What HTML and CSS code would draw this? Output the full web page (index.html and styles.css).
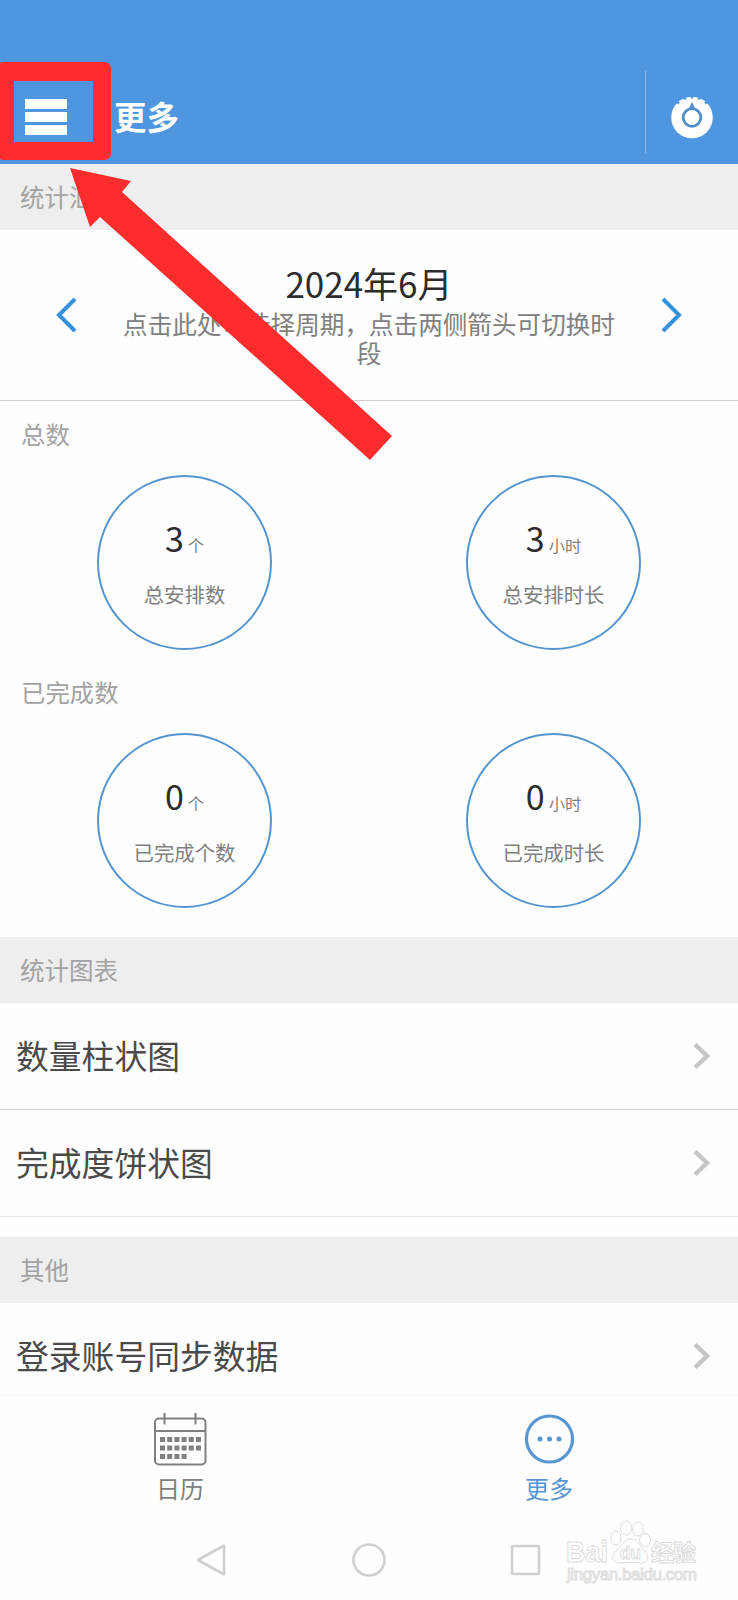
FILE: index.html
```
<!DOCTYPE html>
<html lang="zh-CN">
<head>
    <meta charset="utf-8">
    <title>更多</title>
    <link rel="stylesheet" href="styles.css">
</head>

<body>
    <header class="header">
        <div class="menuButton"><i></i><i></i><i></i></div>
        <h1>更多</h1>
        <svg class="knob" width="44" height="44" viewBox="0 0 44 44">
            <circle cx="22" cy="22.500" r="20.800" fill="#fff" />
            <path d="M6 6 L9 8.500 M13 0.500 L15.500 4.500 M31 0.500 L28.500 4.500 M38 6 L35 8.500 M22 0 V3.500" stroke="#4e96e0" stroke-width="2.500" />
            <path d="M22 7 L18 15 H26 Z" fill="#4e8fcb" />
            <circle cx="22" cy="22.500" r="8.800" fill="#fff" stroke="#4e8fcb" stroke-width="2.800" />
        </svg>
    </header>

    <main>
        <h2 class="section">统计汇总</h2>
        <div class="period">
            <svg width="22" height="36" viewBox="0 0 22 36"><path d="M19 2 L3 18 L19 34" /></svg>
            <div class="periodText">
                <strong>2024年6月</strong>
                <p>点击此处可选择周期，点击两侧箭头可切换时段</p>
            </div>
            <svg width="22" height="36" viewBox="0 0 22 36"><path d="M3 2 L19 18 L3 34" /></svg>
        </div>

        <div class="stats">
            <h3>总数</h3>
            <div class="circles">
                <div class="circle"><div class="value">3<small>个</small></div><p>总安排数</p></div>
                <div class="circle"><div class="value">3<small>小时</small></div><p>总安排时长</p></div>
            </div>
            <h3>已完成数</h3>
            <div class="circles">
                <div class="circle"><div class="value">0<small>个</small></div><p>已完成个数</p></div>
                <div class="circle"><div class="value">0<small>小时</small></div><p>已完成时长</p></div>
            </div>
        </div>

        <h2 class="section">统计图表</h2>
        <div class="list">
            <div class="row">数量柱状图<svg width="18" height="28" viewBox="0 0 18 28"><path d="M2 2.500 L14 14 L2 25.500" /></svg></div>
            <div class="row">完成度饼状图<svg width="18" height="28" viewBox="0 0 18 28"><path d="M2 2.500 L14 14 L2 25.500" /></svg></div>
        </div>

        <h2 class="section">其他</h2>
        <div class="row lastRow">登录账号同步数据<svg width="18" height="28" viewBox="0 0 18 28"><path d="M2 2.500 L14 14 L2 25.500" /></svg></div>
    </main>

    <nav class="tabs">
        <div class="tab">
            <svg width="54" height="54" viewBox="0 0 54 54" fill="none" stroke="#808080" stroke-width="2">
                <rect x="2" y="5.500" width="50.500" height="46" rx="4" />
                <path d="M2 18 H52 M11.500 0 V11.500 M42.500 0 V11.500" />
                <path d="M7 26.500 H48 M7 35 H48 M7 43.500 H34" stroke-width="5" stroke-dasharray="5 2.200" />
            </svg>
            <span>日历</span>
        </div>
        <div class="tab active">
            <svg width="54" height="54" viewBox="0 0 54 54">
                <circle cx="27.500" cy="26" r="23" fill="none" stroke="#5896d2" stroke-width="3.200" />
                <g fill="#5896d2">
                    <circle cx="18" cy="26" r="2.500" />
                    <circle cx="27.500" cy="26" r="2.500" />
                    <circle cx="37" cy="26" r="2.500" />
                </g>
            </svg>
            <span>更多</span>
        </div>
    </nav>

    <div class="systemBar">
        <svg width="34" height="36" viewBox="0 0 34 36"><path d="M3 18 L29 3.500 V32.500 Z" /></svg>
        <svg width="34" height="36" viewBox="0 0 34 36"><circle cx="17" cy="18" r="15.500" /></svg>
        <svg width="34" height="36" viewBox="0 0 34 36"><rect x="3" y="4" width="27" height="28" rx="1" /></svg>
    </div>

    <!-- red marker around the menu button -->
    <svg class="marker" width="400" height="470" viewBox="0 0 400 470">
        <path fill-rule="evenodd" d="M0 63 Q1 62 3 62 H104 Q111 62 111 69 V153 Q111 160 104 160 H3 Q1 160 0 159 Z M14 81 V142 H93 V81 Z" />
        <path d="M70 168 L131 181 L122 192 L392 436 L370 460 L100 217 L90 227 Z" />
    </svg>

    <svg class="watermark" width="150" height="74" viewBox="0 0 150 74">
        <text class="brand" x="6" y="41" textLength="42" lengthAdjust="spacingAndGlyphs">Bai</text>
        <ellipse cx="56" cy="17" rx="5" ry="7" />
        <ellipse cx="66" cy="7" rx="5.500" ry="7" />
        <ellipse cx="78" cy="8" rx="5.500" ry="7" />
        <ellipse cx="85" cy="19" rx="5.500" ry="6.500" />
        <path d="M71 18 C64 18 61 26 55 31 C50 37 54 43 61 42 C68 41 74 41 80 42 C88 43 90 36 85 30 C79 25 78 18 71 18 Z" />
        <text class="du" x="60" y="38" textLength="21" lengthAdjust="spacingAndGlyphs">du</text>
        <text class="brandCn" x="91" y="40" textLength="45">经验</text>
        <text class="url" x="7" y="59" textLength="130">jingyan.baidu.com</text>
    </svg>
</body>

</html>
```
FILE: styles.css
```
* {
    box-sizing: border-box;
}

body {
    margin: 0;
    height: 1600px;
    position: relative;
    overflow: hidden;
    display: flex;
    flex-direction: column;
    background: #fefefe;
    color: #4a4a4a;
    font-family: "Noto Sans CJK SC", sans-serif;
}

h1, h2, h3, p {
    margin: 0;
    font-weight: 400;
}

.header {
    height: 164px;
    padding: 71px 24px 0 25px;
    display: flex;
    background: #4e96e0;
    color: #fff;
}

    .header h1 {
        flex: 1;
        height: 82px;
        padding-left: 20px;
        border-right: 1px solid #8abbec;
        font-size: 32.5px;
        font-weight: 700;
        line-height: 89px;
    }

.menuButton {
    width: 69px;
    height: 82px;
    padding-top: 28px;
    border-right: 1px solid #3d74ac;
}

    .menuButton i {
        display: block;
        width: 42px;
        height: 10px;
        margin-bottom: 3px;
        background: #fff;
    }

.knob {
    margin: 24px 0 0 24px;
}

.section {
    height: 66px;
    padding-left: 20px;
    background: #eee;
    color: #a2a2a2;
    font-size: 24.5px;
    line-height: 66px;
}

.period {
    height: 171px;
    padding: 0 56px;
    display: flex;
    justify-content: space-between;
    border-bottom: 1px solid #d0d0d0;
}

    .period svg {
        margin-top: 67px;
        fill: none;
        stroke: #3592dc;
        stroke-width: 4;
    }

.periodText {
    width: 500px;
    padding-top: 31px;
    text-align: center;
}

    .periodText strong {
        display: block;
        color: #2c2c2c;
        font-size: 35px;
        font-weight: 400;
        line-height: 44px;
    }

    .periodText p {
        color: #808080;
        font-size: 24.6px;
        line-height: 29px;
        padding-top: 4px;
    }

.stats {
    height: 536px;
}

    .stats h3 {
        height: 74px;
        padding-left: 21px;
        color: #a2a2a2;
        font-size: 24.4px;
        line-height: 66px;
    }

.circles {
    height: 184px;
    display: grid;
    grid-template-columns: 1fr 1fr;
    justify-items: center;
}

.circle {
    width: 175px;
    height: 175px;
    border: 2px solid #5595cf;
    border-radius: 50%;
    padding-top: 37px;
    color: #808080;
    text-align: center;
}

    .circle p {
        font-size: 20.4px;
        line-height: 30px;
        padding-top: 10px;
    }

.value {
    color: #2c2c2c;
    font-size: 34px;
    line-height: 48px;
}

    .value small {
        margin-left: 4px;
        color: #808080;
        font-size: 16.3px;
    }

.list {
    height: 234px;
}

.row {
    height: 107px;
    padding: 0 27px 2px 16px;
    display: flex;
    align-items: center;
    justify-content: space-between;
    border-bottom: 1px solid #cfd0d1;
    font-size: 32.8px;
    line-height: 48px;
}

    .row:last-child {
        border-bottom-color: #e8e8e8;
    }

    .row svg {
        margin-top: 2px;
        fill: none;
        stroke: #c5c5c5;
        stroke-width: 4.5;
    }

.lastRow {
    height: 93px;
    align-items: flex-start;
    padding-top: 28px;
}

    .row.lastRow {
        border-bottom-color: #f7f7f7;
    }

    .lastRow svg {
        margin-top: 11px;
    }

.tabs {
    height: 124px;
    padding-top: 17px;
    display: grid;
    grid-template-columns: 360px 378px;
}

.tab {
    display: flex;
    flex-direction: column;
    align-items: center;
    color: #808080;
    font-size: 24px;
    line-height: 36px;
}

    .tab span {
        margin-top: 3px;
    }

    .tab.active {
        color: #5896d2;
    }

.systemBar {
    height: 80px;
    padding: 22px 195px 0;
    display: flex;
    justify-content: space-between;
}

    .systemBar svg {
        fill: none;
        stroke: #d0d0d0;
        stroke-width: 2.6;
        stroke-linejoin: round;
    }

.marker {
    position: absolute;
    left: 0;
    top: 0;
    fill: #fd2d2e;
}

.watermark {
    position: absolute;
    left: 560px;
    top: 1521px;
    overflow: visible;
    fill: #fff;
    stroke: #dcdcdc;
    stroke-width: 1;
}

.brand, .du {
    font-family: "Liberation Sans", sans-serif;
    font-weight: 700;
    font-size: 30px;
}

.du {
    font-size: 19px;
}

.brandCn {
    font-size: 23px;
    font-weight: 700;
}

.url {
    font-family: "Liberation Sans", sans-serif;
    font-size: 17px;
}
```
